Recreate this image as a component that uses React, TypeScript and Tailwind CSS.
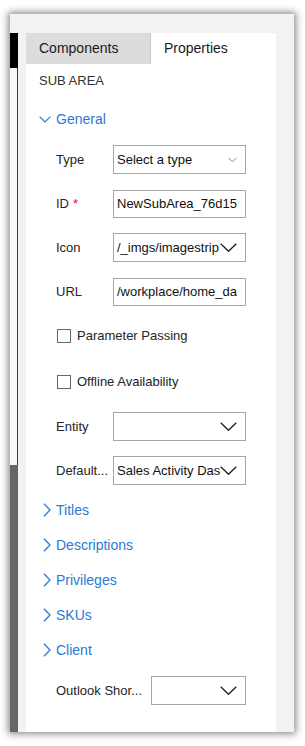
const font = "font-['Segoe_UI','Liberation_Sans',sans-serif]";

const Caret = ({ small }: { small?: boolean }) =>
  small ? (
    <svg width="9" height="6" viewBox="0 0 9 6" className="shrink-0">
      <path d="M0.5 0.8 L4.5 4.8 L8.5 0.8" fill="none" stroke="#8a8a8a" strokeWidth="1" />
    </svg>
  ) : (
    <svg width="17" height="9" viewBox="0 0 17 9" className="shrink-0">
      <path d="M0.7 0.7 L8.5 8.3 L16.3 0.7" fill="none" stroke="#1c1c2c" strokeWidth="1.3" />
    </svg>
  );

const Field = ({
  label,
  value,
  caret,
  required,
  h = "h-[29px]",
  mt,
}: {
  label: string;
  value?: string;
  caret?: "small" | "big";
  required?: boolean;
  h?: string;
  mt: string;
}) => (
  <div className={`flex items-center ${mt} ${h}`}>
    <div className="w-[57px] pl-[30px] box-content shrink-0 text-[#252525] whitespace-nowrap">
      {label}
      {required && <span className="text-[#e81123] ml-[4px]">*</span>}
    </div>
    <div className="w-[133px] h-full border border-[#a6a6a6] flex items-center pl-[3px] pr-[8px] overflow-hidden">
      <span className="flex-1 whitespace-nowrap overflow-hidden text-[#111]">{value}</span>
      {caret === "small" && <Caret small />}
      {caret === "big" && <Caret />}
    </div>
  </div>
);

const Check = ({ label, mt }: { label: string; mt: string }) => (
  <div className={`flex items-center h-[22px] pl-[31px] ${mt}`}>
    <div className="w-[14px] h-[14px] border border-[#666] bg-white" />
    <span className="ml-[6px] text-[#252525]">{label}</span>
  </div>
);

const Section = ({ label, mt }: { label: string; mt: string }) => (
  <div className={`flex items-center h-[20px] pl-[17px] text-[#2a7ad3] ${mt}`}>
    <svg width="8" height="14" viewBox="0 0 8 14" className="shrink-0">
      <path d="M1 0.8 L7 7 L1 13.2" fill="none" stroke="#2a7ad3" strokeWidth="1.3" />
    </svg>
    <span className="ml-[5px]">{label}</span>
  </div>
);

export default function App() {
  return (
    <div className={`w-[305px] h-[746px] bg-white pt-[14px] pl-[10px] text-[13px] ${font}`}>
      <div className="w-[284px] h-[718px] flex bg-[#f2f2f2] shadow-[0_0_7px_2px_rgba(0,0,0,0.45)]">
        {/* left strip */}
        <div className="w-[8px] flex flex-col">
          <div className="h-[19px] bg-[#f2f2f2]" />
          <div className="h-[35px] bg-black" />
          <div className="h-[397px] bg-[#f7f7f9] border-r border-[#3a3a3a]" />
          <div className="flex-1 bg-[#666666]" />
        </div>

        <div className="flex-1 pl-[8px] pt-[19px]">
          <div className="w-[250px] h-full bg-white flex flex-col">
            {/* tabs */}
            <div className="flex h-[31px] text-[14px]">
              <div className="w-[125px] bg-[#dcdcdc] border-r border-[#c6c6c6] flex items-center pl-[13px] text-[#1a1a1a]">
                Components
              </div>
              <div className="flex-1 flex items-center pl-[13px] text-[#1a1a1a]">Properties</div>
            </div>

            <div className="h-[34px] flex items-center pl-[13px] text-[#333]">SUB AREA</div>

            <div className="h-[42px] flex items-center pl-[13px] text-[#2a7ad3] text-[14px]">
              <svg width="12" height="7" viewBox="0 0 12 7" className="shrink-0">
                <path d="M0.6 0.6 L6 6 L11.4 0.6" fill="none" stroke="#2a7ad3" strokeWidth="1.2" />
              </svg>
              <span className="ml-[5px]">General</span>
            </div>

            <Field mt="mt-[5px]" label="Type" value="Select a type" caret="small" />
            <Field mt="mt-[16px]" h="h-[28px]" label="ID" required value="NewSubArea_76d15db" />
            <Field mt="mt-[15px]" label="Icon" value="/_imgs/imagestrip" caret="big" />
            <Field mt="mt-[16px]" h="h-[28px]" label="URL" value="/workplace/home_dash" />

            <Check mt="mt-[19px]" label="Parameter Passing" />
            <Check mt="mt-[24px]" label="Offline Availability" />

            <Field mt="mt-[19px]" label="Entity" value="" caret="big" />
            <Field mt="mt-[15px]" label="Default..." value="Sales Activity Dash" caret="big" />

            <div className="text-[14px]">
              <Section mt="mt-[15px]" label="Titles" />
              <Section mt="mt-[15px]" label="Descriptions" />
              <Section mt="mt-[15px]" label="Privileges" />
              <Section mt="mt-[15px]" label="SKUs" />
              <Section mt="mt-[15px]" label="Client" />
            </div>

            <div className="flex items-center mt-[16px] h-[29px]">
              <div className="w-[125px] pl-[30px] shrink-0 text-[#252525] whitespace-nowrap overflow-hidden">
                Outlook Shor...
              </div>
              <div className="w-[95px] h-full border border-[#a6a6a6] flex items-center justify-end pr-[8px]">
                <Caret />
              </div>
            </div>
          </div>
        </div>
      </div>
    </div>
  );
}
